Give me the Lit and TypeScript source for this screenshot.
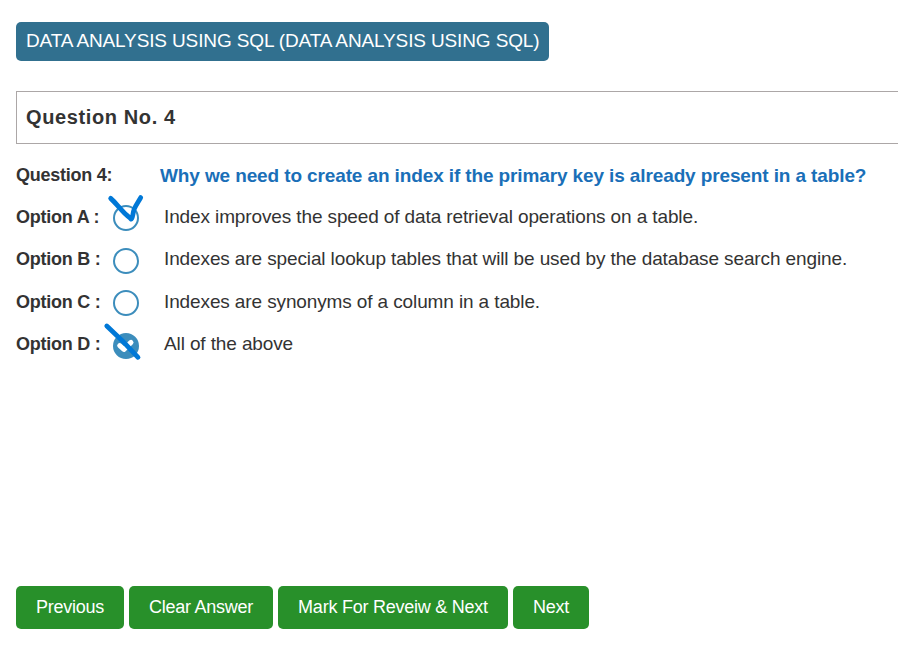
import { LitElement, html, css, svg, nothing } from "lit";
import { customElement, property } from "lit/decorators.js";
import { classMap } from "lit/directives/class-map.js";

@customElement("option-row")
class OptionRow extends LitElement {
  @property() label = "";
  @property() text = "";
  @property({ type: Boolean }) checked = false;
  @property() stroke = "";

  static styles = css`
    :host { display: flex; align-items: center; height: 42.5px; color: #333; white-space: nowrap; }
    .label { width: 97px; font-size: 18px; line-height: 22px; font-weight: 700; letter-spacing: -0.24px; }
    .radio { position: relative; width: 26px; height: 26px; margin-top: 2.4px; }
    .radio svg { display: block; overflow: visible; }
    .text { margin-left: 25px; font-size: 19px; line-height: 22px; letter-spacing: -0.12px; }
    .ring { fill: #fff; stroke: #3c8dbc; stroke-width: 2; }
    .on .ring { fill: #3c8dbc; }
    .tick { fill: none; stroke: #fff; stroke-width: 5; stroke-linecap: round; stroke-linejoin: round; }
    .pen { fill: none; stroke: #0078d7; stroke-width: 4.8; stroke-linecap: round; stroke-linejoin: round; }
  `;

  render() {
    return html`
      <span class="label">${this.label}</span>
      <span class=${classMap({ radio: true, on: this.checked })}>
        <svg width="26" height="26" viewBox="0 0 26 26">
          <circle class="ring" cx="13" cy="13" r="12" />
          ${this.checked ? svg`<path class="tick" d="M6.7 12.7 L10.9 16.4 L18 9.4" />` : nothing}
          ${this.stroke ? svg`<path class="pen" d=${this.stroke} />` : nothing}
        </svg>
      </span>
      <span class="text">${this.text}</span>
    `;
  }
}

@customElement("app-root")
class AppRoot extends LitElement {
  private options = [
    { label: "Option A :", text: "Index improves the speed of data retrieval operations on a table.", stroke: "M-2.3 -6.6 C3 -1.8 8 5 13 9.5 C15 11.4 17 12.7 18.2 14.2 C19.8 14 19.6 8 21.3 3.9 C23 -0.3 25.5 -3.5 27.7 -7.4" },
    { label: "Option B :", text: "Indexes are special lookup tables that will be used by the database search engine." },
    { label: "Option C :", text: "Indexes are synonyms of a column in a table." },
    { label: "Option D :", text: "All of the above", checked: true, stroke: "M-6.2 -7 L9 7.4 L25 24.3" },
  ];

  static styles = css`
    :host { display: block; box-sizing: border-box; height: 652px; overflow: hidden; padding: 22px 0 0 16px; background: #fff; font-family: "Liberation Sans", Arial, sans-serif; color: #333; white-space: nowrap; }
    .title { box-sizing: border-box; width: 533px; height: 39px; padding-left: 10px; border-radius: 5px; background: #31708f; color: #fff; font-size: 19px; line-height: 37px; letter-spacing: -0.13px; }
    .heading { box-sizing: border-box; height: 53px; margin-top: 30px; padding-left: 9px; border: 1px solid #aca7a7; border-right: 0; font-size: 20px; font-weight: 700; line-height: 50px; letter-spacing: 0.62px; }
    .question { display: flex; align-items: center; height: 41.7px; margin-top: 10px; font-weight: 700; }
    .number { width: 144px; font-size: 18px; line-height: 22px; letter-spacing: -0.26px; }
    .prompt { padding-top: 2px; font-size: 19px; line-height: 22px; letter-spacing: -0.12px; color: #1a6fb8; }
    .actions { display: flex; gap: 5px; margin-top: 220.3px; }
    button { box-sizing: border-box; height: 43px; padding: 0; border: 0; border-radius: 5px; background: #28902a; color: #fff; font: 18px/22px "Liberation Sans", Arial, sans-serif; letter-spacing: -0.24px; }
    .previous { width: 108px; }
    .clear { width: 144px; }
    .mark { width: 230px; }
    .next { width: 76px; }
  `;

  render() {
    return html`
      <div class="title">DATA ANALYSIS USING SQL (DATA ANALYSIS USING SQL)</div>
      <div class="heading">Question No. 4</div>
      <div class="question">
        <span class="number">Question 4:</span>
        <span class="prompt">Why we need to create an index if the primary key is already present in a table?</span>
      </div>
      ${this.options.map((o) => html`<option-row .label=${o.label} .text=${o.text} .checked=${!!o.checked} .stroke=${o.stroke ?? ""}></option-row>`)}
      <div class="actions">
        <button class="previous">Previous</button>
        <button class="clear">Clear Answer</button>
        <button class="mark">Mark For Reveiw &amp; Next</button>
        <button class="next">Next</button>
      </div>
    `;
  }
}
